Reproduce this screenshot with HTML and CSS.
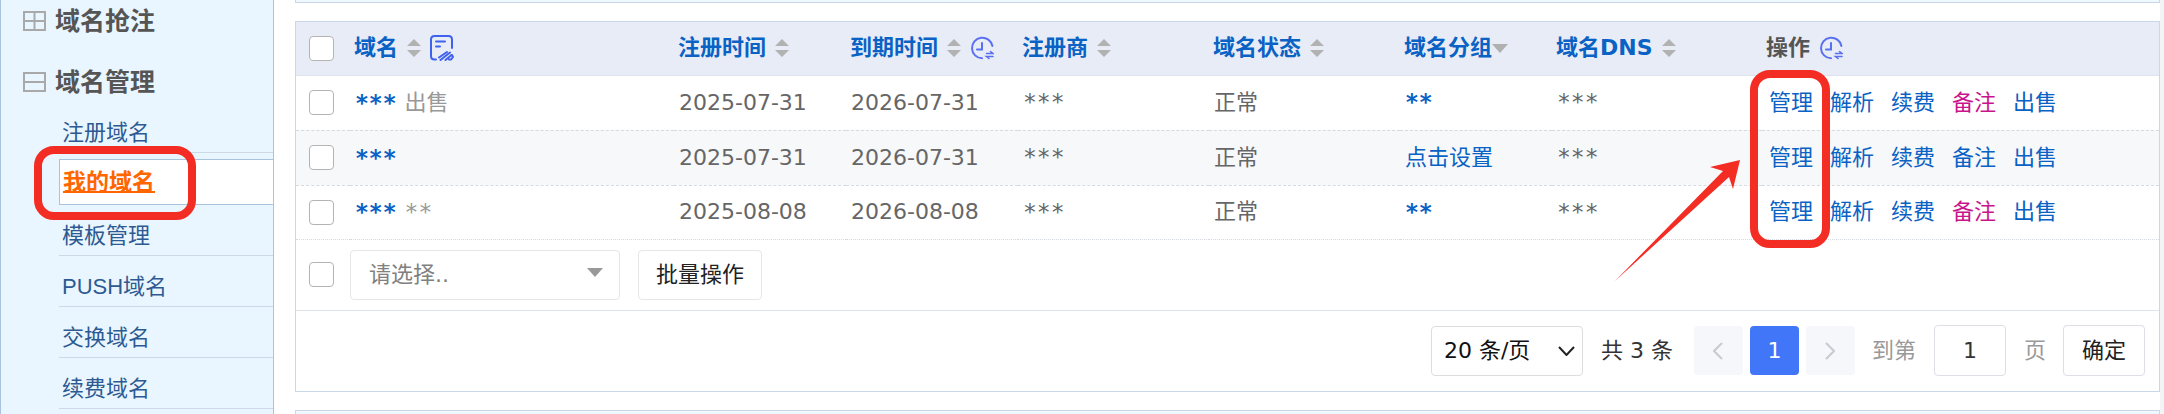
FILE: index.html
```
<!DOCTYPE html>
<html lang="zh-CN">
<head>
    <meta charset="UTF-8">
    <meta name="viewport" content="width=device-width, initial-scale=1.0">
    <title>我的域名</title>
    <link rel="stylesheet" href="styles.css">
</head>
<body>

<!-- shared icons -->
<svg class="sprite" aria-hidden="true">
    <symbol id="i-sort" viewBox="0 0 14 18">
        <path d="M7 0l7 7H0zM0 11h14l-7 7z" fill="#b2b2b2"/>
    </symbol>
    <symbol id="i-clock" viewBox="0 0 24 24">
        <g fill="none" stroke="#5b70f0" stroke-width="2" stroke-linecap="round">
            <path d="M22.400 10A10.300 10.300 0 1 0 12 22.300"/>
            <path d="M12 7v6.500H7"/>
            <path d="M16.500 17.500H23l-2.500-2M23 20.500h-6.500l2.500 2" stroke-width="1.600"/>
        </g>
    </symbol>
    <symbol id="i-edit" viewBox="0 0 24 26">
        <g fill="none" stroke="#3f62ee" stroke-width="2" stroke-linecap="round">
            <path d="M6 24.500H4.500Q1 24.500 1 21V4.500Q1 1 4.500 1h14Q22 1 22 4.500V13"/>
            <path d="M6 6.500h9M6 11.500h4"/>
            <path d="M9 22.500l8-5.500M10.500 25l9.500-7.500M15.500 25l6-5M19 24.500h2l2-2.500-1-2"/>
        </g>
    </symbol>
</svg>

<div class="page">
    <aside class="sidebar">
        <h4 class="menu-title">
            <svg class="fold" viewBox="0 0 23 20"><path d="M1 1h21v18H1zM1 10h21M11.500 1v18"/></svg>
            域名抢注
        </h4>
        <h4 class="menu-title">
            <svg class="fold" viewBox="0 0 23 20"><path d="M1 1h21v18H1zM1 10h21"/></svg>
            域名管理
        </h4>
        <ul class="menu">
            <li><a href="#">注册域名</a></li>
            <li class="active"><a href="#">我的域名</a></li>
            <li><a href="#">模板管理</a></li>
            <li><a href="#">PUSH域名</a></li>
            <li><a href="#">交换域名</a></li>
            <li><a href="#">续费域名</a></li>
        </ul>
        <div class="mark mark-menu"></div>
    </aside>

    <main class="content">
        <div class="bar-top"></div>

        <section class="panel">
            <table class="domains">
                <colgroup>
                    <col class="c-check"><col class="c-name"><col class="c-date"><col class="c-date">
                    <col class="c-mid"><col class="c-mid"><col class="c-group"><col class="c-dns"><col>
                </colgroup>
                <thead>
                    <tr>
                        <th><input type="checkbox" aria-label="全选"></th>
                        <th><div class="th"><a href="#">域名</a><svg class="sort"><use href="#i-sort"/></svg><svg class="edit"><use href="#i-edit"/></svg></div></th>
                        <th><div class="th"><a href="#">注册时间</a><svg class="sort"><use href="#i-sort"/></svg></div></th>
                        <th><div class="th"><a href="#">到期时间</a><svg class="sort"><use href="#i-sort"/></svg><svg class="clock"><use href="#i-clock"/></svg></div></th>
                        <th><div class="th"><a href="#">注册商</a><svg class="sort"><use href="#i-sort"/></svg></div></th>
                        <th><div class="th"><a href="#">域名状态</a><svg class="sort"><use href="#i-sort"/></svg></div></th>
                        <th><div class="th tight"><a href="#">域名分组</a><i class="caret"></i></div></th>
                        <th><div class="th"><a href="#">域名DNS</a><svg class="sort"><use href="#i-sort"/></svg></div></th>
                        <th><div class="th">操作<svg class="clock"><use href="#i-clock"/></svg></div></th>
                    </tr>
                </thead>
                <tbody>
                    <tr>
                        <td><input type="checkbox" aria-label="选择域名"></td>
                        <td><div class="name"><a class="mask" href="#">***</a><span class="note">出售</span></div></td>
                        <td>2025-07-31</td>
                        <td>2026-07-31</td>
                        <td><span class="mask">***</span></td>
                        <td>正常</td>
                        <td><a class="mask" href="#">**</a></td>
                        <td><span class="mask">***</span></td>
                        <td><div class="ops"><a href="#">管理</a><a href="#">解析</a><a href="#">续费</a><a class="pink" href="#">备注</a><a href="#">出售</a></div></td>
                    </tr>
                    <tr>
                        <td><input type="checkbox" aria-label="选择域名"></td>
                        <td><div class="name"><a class="mask" href="#">***</a></div></td>
                        <td>2025-07-31</td>
                        <td>2026-07-31</td>
                        <td><span class="mask">***</span></td>
                        <td>正常</td>
                        <td><a href="#">点击设置</a></td>
                        <td><span class="mask">***</span></td>
                        <td><div class="ops"><a href="#">管理</a><a href="#">解析</a><a href="#">续费</a><a href="#">备注</a><a href="#">出售</a></div></td>
                    </tr>
                    <tr>
                        <td><input type="checkbox" aria-label="选择域名"></td>
                        <td><div class="name"><a class="mask" href="#">***</a><span class="note mask">**</span></div></td>
                        <td>2025-08-08</td>
                        <td>2026-08-08</td>
                        <td><span class="mask">***</span></td>
                        <td>正常</td>
                        <td><a class="mask" href="#">**</a></td>
                        <td><span class="mask">***</span></td>
                        <td><div class="ops"><a href="#">管理</a><a href="#">解析</a><a href="#">续费</a><a class="pink" href="#">备注</a><a href="#">出售</a></div></td>
                    </tr>
                </tbody>
            </table>

            <div class="batch">
                <input type="checkbox" aria-label="全选">
                <div class="select batch-select">
                    <select aria-label="批量操作类型"><option>请选择..</option></select>
                    <i class="caret"></i>
                </div>
                <button class="btn" type="button">批量操作</button>
            </div>

            <div class="pager">
                <div class="select size-select">
                    <select aria-label="每页条数"><option>20 条/页</option></select>
                    <svg class="chevron" viewBox="0 0 17 10"><path d="M1 1l7.500 8L16 1"/></svg>
                </div>
                <span class="total">共 3 条</span>
                <div class="pages">
                    <button class="page-btn" type="button" disabled aria-label="上一页"><svg viewBox="0 0 10 18"><path d="M9 1L1 9l8 8"/></svg></button>
                    <button class="page-btn current" type="button">1</button>
                    <button class="page-btn" type="button" disabled aria-label="下一页"><svg viewBox="0 0 10 18"><path d="M1 1l8 8-8 8"/></svg></button>
                </div>
                <label class="jump">到第 <input type="text" value="1"> 页</label>
                <button class="btn" type="button">确定</button>
            </div>

            <div class="mark mark-ops"></div>
            <svg class="arrow" viewBox="0 0 126 122"><path d="M125 0L95 7l13 4L0 121 114 17l4 12z"/></svg>
        </section>

        <div class="bar-bottom"></div>
    </main>
</div>

</body>
</html>
```
FILE: styles.css
```
*{
    box-sizing: border-box;
}

body{
    margin: 0;
    background-color: #fff;
    color: #666;
    font-family: "DejaVu Sans", "Noto Sans CJK SC", sans-serif;
    font-size: 22px;
    line-height: 32px;
}

a{
    color: #0a62c4;
    text-decoration: none;
}

input, select, button{
    font: inherit;
    color: inherit;
}

.sprite{
    display: none;
}

.page{
    display: flex;
    height: 100vh;
    overflow: hidden;
    border-right: 4px solid #f3f4f5;
}

/* sidebar */

.sidebar{
    position: relative;
    flex: 0 0 274px;
    background-color: #eaf6ff;
    border-left: 1px solid #a9c3df;
    border-right: 1px solid #a9c3df;
    font-family: "Liberation Sans", "Noto Sans CJK SC", sans-serif;
}

.menu-title{
    display: flex;
    align-items: center;
    gap: 9px;
    height: 61px;
    margin: 0;
    padding-left: 22px;
    color: #555;
    font-size: 25px;
}

.menu-title:first-child{
    height: 41px;
}

.menu-title + .menu-title{
    padding-top: 20px;
}

.fold{
    width: 23px;
    height: 20px;
    fill: none;
    stroke: #a9a9a9;
    stroke-width: 2;
}

.menu{
    list-style: none;
    margin: 0;
    padding: 0 0 0 58px;
}

.menu li{
    height: 51px;
    padding: 15px 0 0 3px;
    border-bottom: 1px solid #ccdae8;
}

.menu a{
    color: #2d5a92;
}

.menu .active{
    height: 46px;
    margin-top: 6px;
    padding-top: 6px;
    background-color: #fff;
    border: 1px solid #a9c3df;
    border-right: 0;
}

.menu .active a{
    color: #ff6600;
    font-size: 23px;
    font-weight: bold;
    text-decoration: underline;
    text-decoration-thickness: 2px;
}

/* content */

.content{
    flex: 1;
    min-width: 0;
    padding-left: 21px;
}

.bar-top, .bar-bottom{
    height: 3px;
    background-color: #f0f8ff;
    border: 1px solid #c9d7e9;
    border-top: 0;
}

.bar-bottom{
    height: 40px;
    border-top: 1px solid #c9d7e9;
}

.panel{
    position: relative;
    margin: 18px 0;
    border: 1px solid #c9d7e9;
}

.domains{
    width: 100%;
    table-layout: fixed;
    border-collapse: collapse;
    text-align: left;
}

.c-check{ width: 54px; }
.c-name{ width: 324px; }
.c-date{ width: 172px; }
.c-mid{ width: 191px; }
.c-group{ width: 152px; }
.c-dns{ width: 210px; }

.domains th, .domains td{
    height: 55px;
    padding: 0 0 0 5px;
    white-space: nowrap;
    border-bottom: 1px dashed #d5dae0;
}

.domains th{
    height: 53px;
    padding-left: 4px;
    background-color: #e7ecf6;
    border-bottom: 1px solid #dce3ec;
    color: #555;
}

.domains th:first-child, .domains td:first-child{
    padding-left: 13px;
}

.domains tbody tr:nth-child(2){
    background-color: #f6f8fa;
}

.domains tbody tr:last-child td{
    height: 54px;
    border-bottom: 1px dotted #d5dae0;
}

.th{
    display: flex;
    align-items: center;
    gap: 9px;
}

.tight{
    gap: 0;
}

.sort{
    width: 14px;
    height: 18px;
}

.clock{
    width: 24px;
    height: 24px;
}

.edit{
    width: 24px;
    height: 26px;
}

.caret{
    border: 8px solid transparent;
    border-top: 9px solid #b0b0b0;
    border-bottom: 0;
}

input[type="checkbox"]{
    appearance: none;
    display: block;
    width: 25px;
    height: 25px;
    margin: 0;
    background-color: #fff;
    border: 1px solid #b4b4b4;
    border-radius: 4px;
}

.mask{
    font-family: "DejaVu Sans Mono", monospace;
    font-size: 23px;
}

a.mask{
    font-weight: bold;
}

.name{
    display: flex;
    gap: 8px;
}

.note{
    color: #999;
}

.ops{
    display: flex;
    gap: 17px;
    padding-left: 2px;
}

.pink{
    color: #c9148c;
}

/* batch row */

.batch{
    display: flex;
    align-items: center;
    height: 71px;
    padding-left: 13px;
    border-bottom: 1px solid #dde3e9;
}

.select{
    position: relative;
}

.select select{
    appearance: none;
    display: block;
    width: 100%;
    height: 50px;
    background-color: #fff;
    border: 1px solid #e6e6e6;
    border-radius: 4px;
}

.batch-select{
    width: 270px;
    margin: 0 18px 0 16px;
    color: #808080;
}

.batch-select select{
    padding: 0 40px 0 18px;
}

.batch-select .caret{
    position: absolute;
    right: 17px;
    top: 18px;
    border-top-color: #999;
}

.btn{
    height: 50px;
    padding: 0 17px;
    background-color: #fff;
    border: 1px solid #e6e6e6;
    border-radius: 4px;
    color: #222;
}

/* pager */

.pager{
    display: flex;
    align-items: center;
    justify-content: flex-end;
    height: 80px;
    padding: 0 14px 0 0;
}

.size-select{
    width: 152px;
    color: #111;
}

.size-select select{
    padding: 0 30px 0 12px;
    border-color: #ddd;
}

.chevron{
    position: absolute;
    right: 8px;
    top: 20px;
    width: 17px;
    height: 10px;
    fill: none;
    stroke: #222;
    stroke-width: 2;
}

.total{
    margin: 0 21px 0 18px;
    color: #333;
}

.pages{
    display: flex;
    gap: 7px;
}

.page-btn{
    display: flex;
    align-items: center;
    justify-content: center;
    width: 49px;
    height: 49px;
    padding: 0;
    background-color: #f6f7fa;
    border: 0;
    border-radius: 4px;
}

.page-btn svg{
    width: 10px;
    height: 18px;
    fill: none;
    stroke: #c8cacf;
    stroke-width: 2;
}

.current{
    background-color: #4276f8;
    color: #fff;
}

.jump{
    display: flex;
    align-items: center;
    gap: 18px;
    margin: 0 17px;
    color: #999;
}

.jump input{
    width: 72px;
    height: 51px;
    padding: 0;
    border: 1px solid #dcdfe6;
    border-radius: 4px;
    color: #333;
    text-align: center;
}

.pager .btn{
    height: 51px;
    padding: 0 18px;
    border-color: #dcdfe6;
}

/* red guide marks */

.mark{
    position: absolute;
    border: 8px solid #f32c24;
    border-radius: 20px;
    pointer-events: none;
}

.mark-menu{
    left: 33px;
    top: 146px;
    width: 162px;
    height: 74px;
}

.mark-ops{
    left: 1454px;
    top: 48px;
    width: 80px;
    height: 178px;
}

.arrow{
    position: absolute;
    left: 1319px;
    top: 138px;
    width: 126px;
    height: 122px;
    fill: #f32c24;
    pointer-events: none;
}
```
